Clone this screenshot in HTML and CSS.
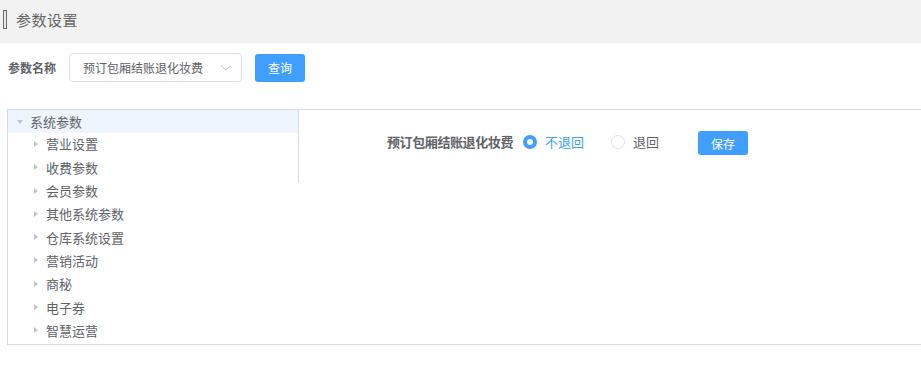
FILE: index.html
```html
<!DOCTYPE html>
<html lang="zh-CN">
<head>
  <meta charset="UTF-8">
  <meta name="viewport" content="width=device-width, initial-scale=1">
  <title>参数设置</title>
  <link rel="stylesheet" href="styles.css">
</head>
<body>

  <header class="page-header">
    <span class="bar"></span>
    <h1>参数设置</h1>
  </header>

  <div class="search-row">
    <label class="search-label">参数名称</label>
    <div class="select">
      <span>预订包厢结账退化妆费</span>
      <svg class="select-arrow" width="12" height="8" viewBox="0 0 12 8"><path d="M1 1.5 L6 6 L11 1.5" fill="none" stroke="#c0c4cc" stroke-width="1"/></svg>
    </div>
    <button class="btn">查询</button>
  </div>

  <div class="panel">
    <div class="tree-col">
      <ul class="tree">
        <li class="node root active"><i class="caret down"></i>系统参数</li>
        <li class="node"><i class="caret"></i>营业设置</li>
        <li class="node"><i class="caret"></i>收费参数</li>
        <li class="node"><i class="caret"></i>会员参数</li>
        <li class="node"><i class="caret"></i>其他系统参数</li>
        <li class="node"><i class="caret"></i>仓库系统设置</li>
        <li class="node"><i class="caret"></i>营销活动</li>
        <li class="node"><i class="caret"></i>商秘</li>
        <li class="node"><i class="caret"></i>电子券</li>
        <li class="node"><i class="caret"></i>智慧运营</li>
      </ul>
    </div>

    <div class="form">
      <div class="form-row">
        <span class="form-label">预订包厢结账退化妆费</span>
        <label class="radio checked"><span class="dot"></span>不退回</label>
        <label class="radio"><span class="dot"></span>退回</label>
        <button class="btn btn-small">保存</button>
      </div>
    </div>
  </div>

</body>
</html>
```

FILE: styles.css
```css
body {
  margin: 0;
  font-family: "Noto Sans CJK SC", "Noto Sans", sans-serif;
  color: #606266;
  background: #fff;
  overflow: hidden;
}
ul {
  list-style: none;
  margin: 0;
  padding: 0;
}
.page-header {
  height: 43px;
  background: #f2f2f2;
  display: flex;
  align-items: center;
  padding-left: 3px;
}
.bar {
  width: 2px;
  height: 17px;
  border: 1px solid #6b6b6b;
  background: #e8e8e8;
  margin-top: -4px;
}
.page-header h1 {
  margin: -4px 0 0 9px;
  font-size: 15px;
  font-weight: normal;
  color: #666;
  letter-spacing: 0.5px;
}
.search-row {
  display: flex;
  align-items: center;
  padding: 10px 0 0 8px;
}
.search-label {
  font-size: 12px;
  font-weight: bold;
  width: 61px;
}
.select {
  box-sizing: border-box;
  width: 173px;
  height: 29px;
  border: 1px solid #dcdfe6;
  border-radius: 4px;
  display: flex;
  align-items: center;
  justify-content: space-between;
  padding: 0 9px 0 13px;
  font-size: 12px;
}
.btn {
  font-family: inherit;
  background: #409eff;
  color: #fff;
  border: none;
  border-radius: 3px;
  width: 50px;
  height: 28px;
  font-size: 12px;
  margin-left: 13px;
  cursor: pointer;
}
.panel {
  margin: 27px -20px 0 7px;
  height: 234px;
  border: 1px solid #d3dce6;
  display: flex;
}
.tree-col {
  width: 290px;
  height: 73px;
  border-right: 1px solid #d3dce6;
  flex-shrink: 0;
}
.node {
  height: 23.3px;
  display: flex;
  align-items: center;
  padding-left: 26px;
  font-size: 13px;
  color: #606266;
  margin-top: -1px;
  margin-bottom: 1px;
}
.node.root {
  padding-left: 9px;
  margin-top: 0;
  margin-bottom: 0;
}
.node.active {
  background: #eef5fe;
}
.caret {
  width: 0;
  height: 0;
  border-top: 3px solid transparent;
  border-bottom: 3px solid transparent;
  border-left: 4px solid #c0c4cc;
  margin-right: 8px;
}
.caret.down {
  border-left: 3px solid transparent;
  border-right: 3px solid transparent;
  border-top: 4px solid #c0c4cc;
  border-bottom: 0;
  margin-right: 7px;
}
.form {
  flex: 1;
  padding: 21px 0 0 88px;
}
.form-row {
  display: flex;
  align-items: center;
  height: 24px;
  font-size: 13px;
}
.form-label {
  font-weight: bold;
  margin-right: 10px;
  margin-top: -3px;
  letter-spacing: -0.4px;
}
.radio {
  display: flex;
  align-items: center;
  margin-right: 27px;
  margin-top: -3px;
}
.radio .dot {
  box-sizing: border-box;
  width: 14px;
  height: 14px;
  border: 1px solid #dcdfe6;
  border-radius: 50%;
  margin-right: 8px;
}
.radio.checked {
  color: #409eff;
}
.radio.checked .dot {
  border: 4px solid #409eff;
  background: #fff;
}
.btn-small {
  height: 24px;
  margin-left: 12px;
}
```
